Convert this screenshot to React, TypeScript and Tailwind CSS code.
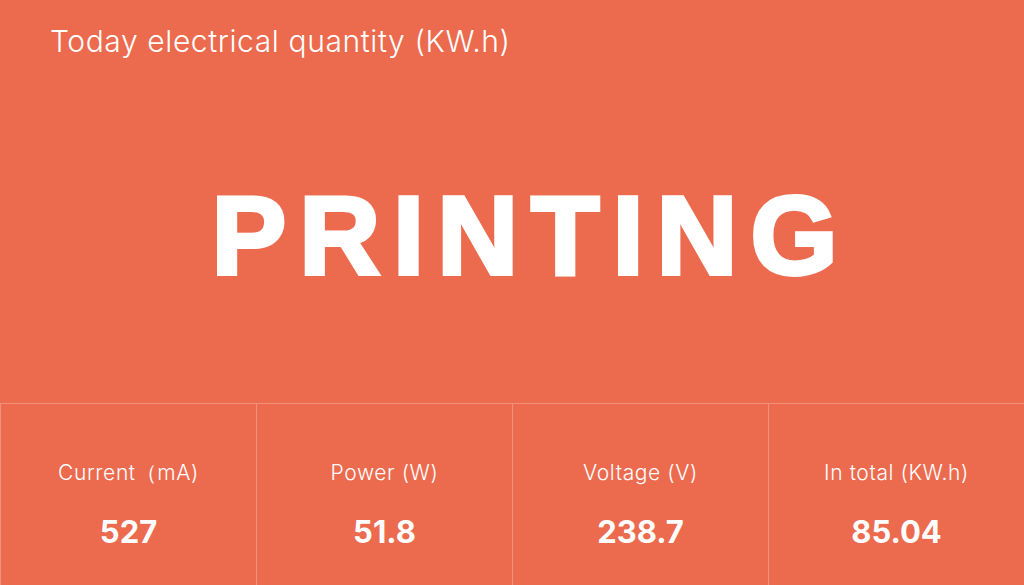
const stats = [
  { label: 'Current（mA)', value: '527' },
  { label: 'Power (W)', value: '51.8' },
  { label: 'Voltage (V)', value: '238.7' },
  { label: 'In total (KW.h)', value: '85.04' },
]

export default function App() {
  return (
    <div className="flex h-[585px] w-[1024px] flex-col overflow-hidden bg-[#ec6b4f] font-['Inter','Liberation_Sans',sans-serif] text-white">
      <header className="h-[80px] pl-[50px] pt-[21px] text-[30px] leading-[40px] font-light tracking-[0.6px]">
        Today electrical quantity (KW.h)
      </header>
      <main className="flex flex-1 items-center justify-center pb-[12px] pl-[38px]">
        <h1 className="font-['Liberation_Sans',Arial,sans-serif] text-[112px] leading-none font-bold tracking-[13px] [-webkit-text-stroke:4px_white]">
          PRINTING
        </h1>
      </main>
      <section className="grid h-[182px] grid-cols-4 border-t border-white/25">
        {stats.map((s) => (
          <div
            key={s.label}
            className="flex flex-col items-center border-l border-white/25 pt-[56px]"
          >
            <p className="text-[21px] leading-[26px] font-light tracking-[0.6px]">{s.label}</p>
            <p className="mt-[28px] text-[31px] leading-[36px] font-bold">{s.value}</p>
          </div>
        ))}
      </section>
    </div>
  )
}
